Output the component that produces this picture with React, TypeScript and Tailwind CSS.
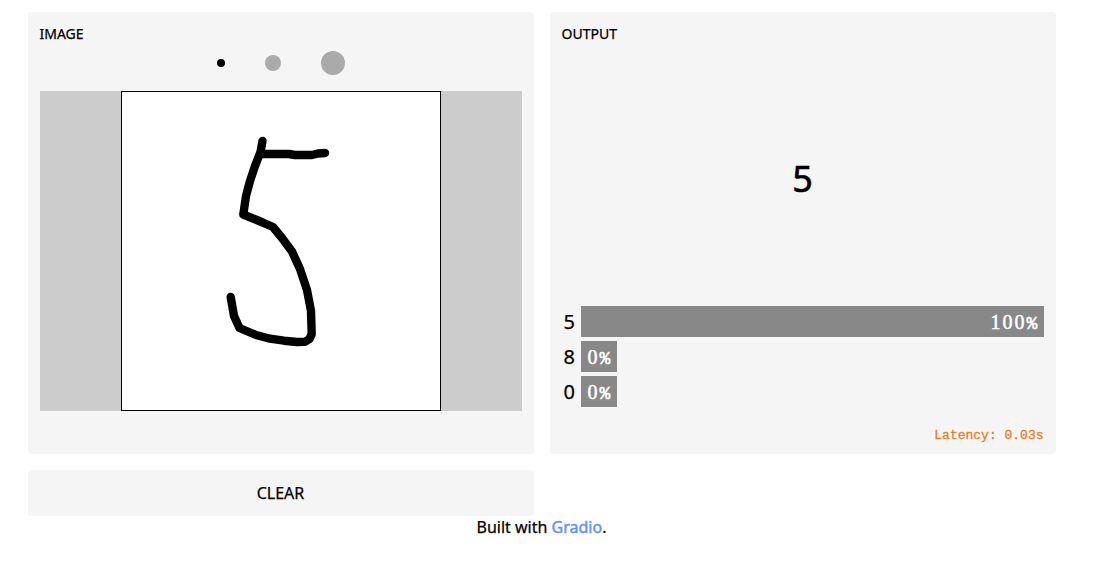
const predictions = [
  { label: "5", value: 100 },
  { label: "8", value: 0 },
  { label: "0", value: 0 },
];

function Sketch() {
  return (
    <svg className="block h-[318px] w-[318px]" viewBox="122 92 318 318" fill="none" stroke="#000" strokeWidth="8.4" strokeLinecap="round" strokeLinejoin="round">
      <path d="M262.5 141L260.5 152L255 166L250 181L246 196L243.3 214.5L258 220.5L273 227L282 238L292 251.5L300 269L307 290L311 311L311.7 334L309.500 339L305 341.800L297 342L284 340.700L270 338.700L256 335L239.500 328L234 316L230.700 297" />
      <path d="M261 154H289L295 155H312L318 153.500L325 153" />
    </svg>
  );
}

export default function App() {
  return (
    <div className="h-[561px] bg-white px-7 pt-3 font-['Noto_Sans',sans-serif] text-black [-webkit-text-stroke:0.25px]">
      <main className="grid w-[1028px] grid-cols-2 gap-4">
        <div className="flex flex-col gap-4">
          <section className="h-[442px] rounded-[4px] bg-[#f5f5f5] px-3 pt-3">
            <h2 className="-ml-[0.5px] h-5 text-sm leading-5">IMAGE</h2>
            <div className="flex h-[47px] items-center justify-center gap-10 pb-[9px]">
              <button aria-label="Small brush" className="size-2 rounded-full bg-black" />
              <button aria-label="Medium brush" className="size-4 rounded-full bg-[#aaa]" />
              <button aria-label="Large brush" className="size-6 rounded-full bg-[#aaa]" />
            </div>
            <div className="flex h-80 justify-center bg-[#ccc]">
              <div className="size-80 border border-black bg-white">
                <Sketch />
              </div>
            </div>
          </section>
          <button className="h-[46px] rounded-[4px] bg-[#f5f5f5] pr-px text-base">CLEAR</button>
        </div>
        <section className="flex h-[442px] flex-col rounded-[4px] bg-[#f5f5f5] px-3 pt-3">
          <h2 className="-ml-[0.5px] h-5 text-sm leading-5">OUTPUT</h2>
          <div className="flex h-[262px] items-center justify-center pr-px pt-[7px] text-[36px] leading-10 [-webkit-text-stroke:0.6px]">5</div>
          <div className="flex flex-col gap-1">
            {predictions.map((item) => (
              <div key={item.label} className="flex h-[31px] items-center">
                <span className="w-[19px] shrink-0 pl-[1.5px] text-xl">{item.label}</span>
                <div
                  className="flex h-full min-w-9 items-baseline justify-end bg-[#888] pr-[6px] pt-[4px] text-white"
                  style={{ width: `${item.value}%` }}
                >
                  <span className="font-['Liberation_Serif',serif] text-[20px] leading-6 tracking-[2px] [-webkit-text-stroke:0.5px]">{item.value}</span>
                  <span className="font-['Liberation_Mono',monospace] text-[18px] leading-6 tracking-[0.6px] [-webkit-text-stroke:0.5px]">%</span>
                </div>
              </div>
            ))}
          </div>
          <p className="mt-[19px] pr-[0.5px] text-right font-['Liberation_Mono',monospace] text-[13px] leading-5 text-[#e67e22] [-webkit-text-stroke:0.3px]">Latency: 0.03s</p>
        </section>
      </main>
      <footer className="-mt-px w-[1027px] text-center text-base leading-6">
        Built with <a className="text-[#6495ed] [-webkit-text-stroke:0.45px]">Gradio</a>.
      </footer>
    </div>
  );
}
